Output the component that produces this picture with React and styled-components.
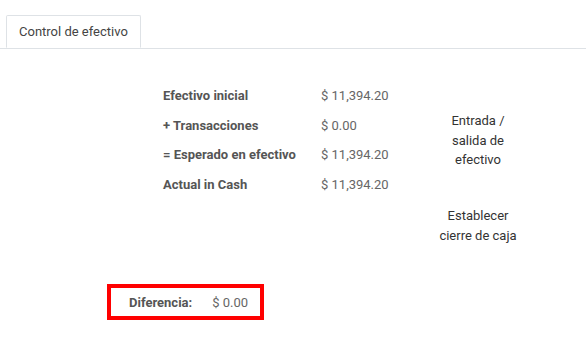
import React from "react";
import styled, { createGlobalStyle } from "styled-components";

const Global = createGlobalStyle`
  html, body { margin: 0; padding: 0; background: #fff; }
  body { font-family: Roboto, "Noto Sans", sans-serif; font-size: 13px; color: #4c4c4c; }
`;

const Page = styled.div`
  width: 586px;
  height: 348px;
  overflow: hidden;
  padding-top: 15px;
  box-sizing: border-box;
`;

const TabBar = styled.div`
  display: flex;
  padding-left: 6px;
  border-bottom: 1px solid #dee2e6;
  height: 33px;
`;

const Tab = styled.div`
  display: flex;
  align-items: center;
  padding: 0 12px;
  border: 1px solid #dee2e6;
  border-bottom: 1px solid #fff;
  border-radius: 2px 2px 0 0;
  background: #fff;
  color: #444;
  font-size: 13px;
  height: 33px;
  box-sizing: border-box;
  margin-bottom: -1px;
`;

const Body = styled.div`
  display: flex;
  flex-direction: column;
`;

const Summary = styled.div`
  display: flex;
  align-items: flex-start;
  padding-left: 163px;
  margin-top: 32px;
`;

const Table = styled.div`
  display: grid;
  grid-template-columns: 158px 90px;
`;

const Label = styled.div`
  font-weight: 700;
  color: #555;
  line-height: 19.5px;
  padding: 5px 0;
`;

const Value = styled.div`
  color: #666;
  line-height: 19.5px;
  padding: 5px 0;
`;

const Actions = styled.div`
  display: flex;
  flex-direction: column;
  gap: 36.5px;
  width: 86px;
  margin-left: 24px;
  padding-top: 30px;
`;

const ActionButton = styled.div`
  text-align: center;
  color: #333;
  line-height: 19.5px;
  font-size: 13px;
`;

const DiffBox = styled.div`
  display: flex;
  align-self: flex-start;
  align-items: center;
  gap: 20px;
  margin-left: 107px;
  margin-top: 39px;
  border: 4px solid #f00;
  height: 36px;
  box-sizing: border-box;
  padding: 0 12px 0 18px;
`;

const DiffLabel = styled.span`
  font-weight: 700;
  color: #555;
`;

const DiffValue = styled.span`
  color: #666;
`;

const rows = [
  ["Efectivo inicial", "$ 11,394.20"],
  ["+ Transacciones", "$ 0.00"],
  ["= Esperado en efectivo", "$ 11,394.20"],
  ["Actual in Cash", "$ 11,394.20"],
];

export default function App() {
  return (
    <Page>
      <Global />
      <TabBar>
        <Tab>Control de efectivo</Tab>
      </TabBar>
      <Body>
        <Summary>
          <Table>
            {rows.map(([l, v]) => (
              <React.Fragment key={l}>
                <Label>{l}</Label>
                <Value>{v}</Value>
              </React.Fragment>
            ))}
          </Table>
          <Actions>
            <ActionButton>Entrada / salida de efectivo</ActionButton>
            <ActionButton>Establecer cierre de caja</ActionButton>
          </Actions>
        </Summary>
        <DiffBox>
          <DiffLabel>Diferencia:</DiffLabel>
          <DiffValue>$ 0.00</DiffValue>
        </DiffBox>
      </Body>
    </Page>
  );
}
